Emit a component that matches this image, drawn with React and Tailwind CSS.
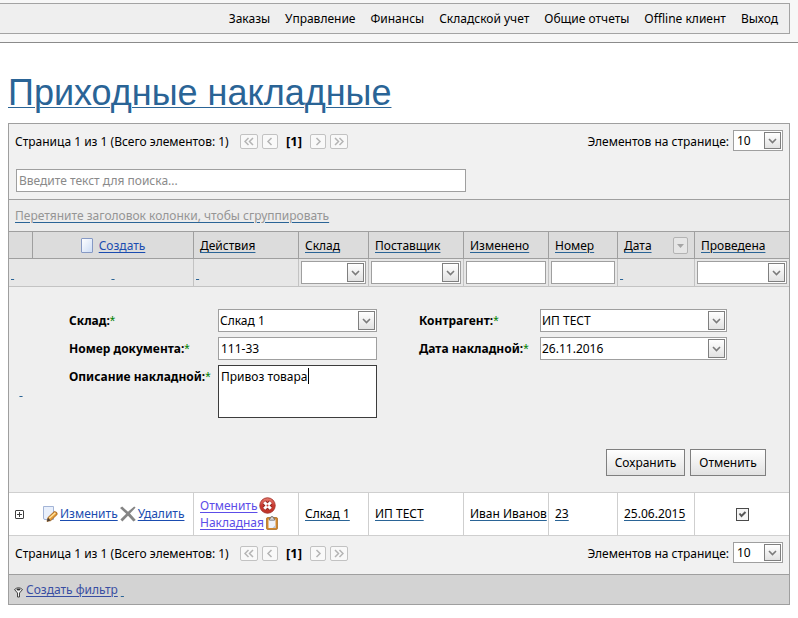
const FONT = "font-['Noto_Sans','Open_Sans',sans-serif]";

function Chevron() {
  return (
    <svg width="9" height="6" viewBox="0 0 9 6" fill="none" stroke="#7b7b7b" strokeWidth="1.6" aria-hidden="true">
      <path d="M1 1 L4.5 4.5 L8 1" />
    </svg>
  );
}

function Combo({ id, label, value, size = "h-[23px]", width = "w-full", text = "pl-px pt-px" }) {
  return (
    <div className={`relative ${size} ${width}`}>
      <select
        id={id}
        aria-label={label}
        className={`block h-full w-full appearance-none border border-[#9f9f9f] bg-white pr-5 outline-none ${text}`}
      >
        <option>{value}</option>
      </select>
      <span className="pointer-events-none absolute top-[2px] right-[2px] bottom-[2px] flex w-[17px] items-center justify-center border border-[#7f7f7f] bg-linear-to-b from-white to-[#e2e2e2]">
        <Chevron />
      </span>
    </div>
  );
}

function PageButton({ label, wide, d }) {
  return (
    <button
      type="button"
      aria-label={label}
      className={`flex h-[15px] items-center justify-center rounded-[2px] border border-[#c2c2c2] bg-[#f9f9f9] ${wide ? "w-[18px]" : "w-4"}`}
    >
      <svg width="10" height="9" viewBox="0 0 10 9" fill="none" stroke="#b4b4b4" strokeWidth="1.5" aria-hidden="true">
        <path d={d} />
      </svg>
    </button>
  );
}

function Pager({ id }) {
  return (
    <div className="flex items-start justify-between bg-[#f1f1f1] px-[6px] pt-[6px] pb-2">
      <div className="flex h-6 items-center">
        <span className="w-[225px]">Страница 1 из 1 (Всего элементов: 1)</span>
        <div className="flex items-center gap-1">
          <PageButton label="Первая" wide d="M4.5 1 L1 4.5 L4.5 8 M9 1 L5.5 4.5 L9 8" />
          <PageButton label="Назад" d="M6.5 1 L3 4.5 L6.5 8" />
          <b className="w-6 text-center text-[13px]">[1]</b>
          <PageButton label="Вперёд" d="M3.5 1 L7 4.5 L3.5 8" />
          <PageButton label="Последняя" wide d="M1 1 L4.5 4.5 L1 8 M5.5 1 L9 4.5 L5.5 8" />
        </div>
      </div>
      <div className="flex items-start gap-1">
        <label htmlFor={id} className="flex h-6 items-center">Элементов на странице:</label>
        <Combo id={id} value="10" size="h-[21px]" width="w-[50px]" text="pl-[3px]" />
      </div>
    </div>
  );
}

function Blank() {
  return (
    <a href="#" className="text-[#2a6496] underline decoration-[#2a6496] decoration-1 underline-offset-2">
      &nbsp;
    </a>
  );
}

function Required({ htmlFor, children }) {
  return (
    <label htmlFor={htmlFor} className="flex h-[23px] items-center font-bold whitespace-nowrap">
      {children}:
      <span className="font-['Liberation_Sans',Arial,sans-serif] text-sm font-normal text-[#008000]">*</span>
    </label>
  );
}

const cellLink = "text-black underline decoration-[#2a6496] decoration-1 underline-offset-2";
const blueLink = "text-[#1a4cb0] underline decoration-1 underline-offset-2";
const violetLink = "text-[#5c4de8] underline decoration-1 underline-offset-2";
const head = "h-[27px] border-r border-b border-[#9f9f9f] bg-[#dcdcdc] pt-px pl-[6px] text-left font-normal";
const filter = "h-7 border-r border-b border-[#c3c3c3] bg-[#e7e7e7] p-[2px]";
const dataBase = "h-[43px] border-b border-[#cfcfcf] bg-white";
const data = `${dataBase} border-r pl-[6px]`;
const field = "block w-full border border-[#9f9f9f] bg-white outline-none";

function DocIcon() {
  return (
    <svg width="12" height="16" viewBox="0 0 12 16" aria-hidden="true">
      <defs>
        <linearGradient id="doc" x1="0" y1="0" x2="1" y2="1">
          <stop offset="0" stopColor="#fff" />
          <stop offset="1" stopColor="#ccdcf5" />
        </linearGradient>
      </defs>
      <rect x="0.5" y="0.5" width="11" height="14" rx="0.5" fill="url(#doc)" stroke="#8699c4" />
    </svg>
  );
}

function EditIcon() {
  return (
    <svg width="16" height="16" viewBox="0 0 16 16" aria-hidden="true">
      <path d="M1.5 0.5 H11.5 V13.5 H3 Q1.5 13.5 1.5 12 Z" fill="#e9f0fc" stroke="#a3b4d6" />
      <path d="M6 11.5 L12.2 5.6 Q15.5 5.6 15.2 8.4 L8.8 14.6 L5 15.4 Z" fill="#e39a35" stroke="#9a5c1c" strokeWidth="0.8" />
      <path d="M7.3 12.3 L13.4 6.7" stroke="#ffe3a3" strokeWidth="1.4" />
      <path d="M5 15.5 L6 11.7 L8.6 14.5 Z" fill="#4a4038" />
    </svg>
  );
}

function DeleteIcon() {
  return (
    <svg width="16" height="16" viewBox="0 0 16 16" fill="#858585" aria-hidden="true">
      <path d="M0 2 L2.2 0.6 L8 5.8 L14.2 0.4 L15.6 1.6 L10 7.6 L15.8 14 L13.4 15.6 L8 9.8 L2.4 15.4 L0.4 13.6 L6.2 7.7 Z" />
    </svg>
  );
}

function CancelIcon() {
  return (
    <svg width="17" height="17" viewBox="0 0 17 17" aria-hidden="true">
      <defs>
        <linearGradient id="red" x1="0" y1="0" x2="0" y2="1">
          <stop offset="0" stopColor="#e88074" />
          <stop offset="0.5" stopColor="#cb3a30" />
          <stop offset="1" stopColor="#c03228" />
        </linearGradient>
      </defs>
      <circle cx="8.5" cy="8.5" r="7.7" fill="url(#red)" stroke="#a93a32" />
      <path d="M5.2 5.2 L11.8 11.8 M11.8 5.2 L5.2 11.8" stroke="#8f2620" strokeWidth="4.8" />
      <path d="M5.2 5.2 L11.8 11.8 M11.8 5.2 L5.2 11.8" stroke="#fff" strokeWidth="3" />
      <circle cx="8.5" cy="8.5" r="1" fill="#cb3a30" />
    </svg>
  );
}

function ClipboardIcon() {
  return (
    <svg width="12" height="14" viewBox="0 0 12 14" aria-hidden="true">
      <rect x="0.7" y="1.7" width="10.6" height="11.6" rx="0.6" fill="#dc8f30" stroke="#a86a1e" />
      <rect x="2.5" y="3.5" width="7" height="8.5" fill="#eff3fa" />
      <path d="M6.5 12 L9.5 9 V12 Z" fill="#b9c4d6" />
      <path d="M3.5 4.2 V2.2 H4.8 L5.2 0.5 H6.8 L7.2 2.2 H8.5 V4.2 Z" fill="#dcdcdc" stroke="#6c6c6c" strokeWidth="0.8" />
    </svg>
  );
}

export default function App() {
  const menu = ["Заказы", "Управление", "Финансы", "Складской учет", "Общие отчеты", "Offline клиент", "Выход"];
  return (
    <div className={`${FONT} text-xs text-black`}>
      <header className="border-b border-[#8b8b8b] bg-[#f7f7f7] pt-[3px] pr-2 pb-2">
        <nav className="flex h-[31px] items-center justify-end gap-[15px] border border-l-0 border-[#a3a3a3] bg-[#efefef] pr-[11px]">
          {menu.map((m) => (
            <a key={m} href="#">{m}</a>
          ))}
        </nav>
      </header>

      <main className="px-2 pt-[30px] pb-3">
        <h1 className="mb-[10px] font-['Liberation_Sans',Arial,sans-serif] text-4xl leading-10 text-[#2a6496]">
          <a href="#" className="underline decoration-1 underline-offset-2">Приходные накладные</a>
        </h1>

        <div className="border border-[#9f9f9f]">
          <Pager id="size-top" />
          <div className="border-b border-[#9f9f9f] bg-[#f1f1f1] p-[7px]">
            <input
              type="text"
              aria-label="Поиск"
              placeholder="Введите текст для поиска..."
              className="block h-[23px] w-[450px] max-w-full border border-[#9f9f9f] bg-white px-[2px] outline-none placeholder:text-[#8a8a8a]"
            />
          </div>
          <div className="flex h-8 items-center border-b border-[#9f9f9f] bg-[#ececec] pl-[6px]">
            <a href="#" className="text-[#959595] underline decoration-[#2a6496] decoration-1 underline-offset-2">
              Перетяните заголовок колонки, чтобы сгруппировать
            </a>
          </div>

          <table className="w-full table-fixed border-separate border-spacing-0">
            <colgroup>
              <col className="w-[24px]" />
              <col className="w-[161px]" />
              <col className="w-[105px]" />
              <col className="w-[70px]" />
              <col className="w-[95px]" />
              <col className="w-[85px]" />
              <col className="w-[69px]" />
              <col className="w-[77px]" />
              <col className="w-[94px]" />
            </colgroup>
            <thead>
              <tr>
                <th className={head}></th>
                <th className={head}>
                  <div className="flex items-center justify-center gap-[6px] pr-[6px]">
                    <DocIcon />
                    <a href="#" className={blueLink}>Создать</a>
                  </div>
                </th>
                <th className={head}><a href="#" className={cellLink}>Действия</a></th>
                <th className={head}><a href="#" className={cellLink}>Склад</a></th>
                <th className={head}><a href="#" className={cellLink}>Поставщик</a></th>
                <th className={head}><a href="#" className={cellLink}>Изменено</a></th>
                <th className={head}><a href="#" className={cellLink}>Номер</a></th>
                <th className={head}>
                  <div className="flex items-center justify-between pr-[6px]">
                    <a href="#" className={cellLink}>Дата</a>
                    <button type="button" aria-label="Фильтр по дате" className="flex h-[17px] w-[15px] items-center justify-center rounded-[2px] border border-[#b3b3b3] bg-[#e6e6e6]">
                      <svg width="7" height="4" viewBox="0 0 7 4" aria-hidden="true"><path d="M0 0 H7 L3.5 4 Z" fill="#a5a5a5" /></svg>
                    </button>
                  </div>
                </th>
                <th className={`${head} border-r-0`}><a href="#" className={cellLink}>Проведена</a></th>
              </tr>
            </thead>
            <tbody>
              <tr>
                <td className={`${filter} border-r-0`}><Blank /></td>
                <td className={`${filter} text-center`}><Blank /></td>
                <td className={filter}><Blank /></td>
                <td className={filter}><Combo label="Фильтр: склад" value="" /></td>
                <td className={filter}><Combo label="Фильтр: поставщик" value="" /></td>
                <td className={filter}><input type="text" aria-label="Фильтр: изменено" className={`${field} h-[23px]`} /></td>
                <td className={filter}><input type="text" aria-label="Фильтр: номер" className={`${field} h-[23px]`} /></td>
                <td className={filter}><Blank /></td>
                <td className={`${filter} border-r-0`}><Combo label="Фильтр: проведена" value="" /></td>
              </tr>

              <tr>
                <td className="border-b border-[#cfcfcf] bg-[#efefef] text-center"><Blank /></td>
                <td colSpan={8} className="border-b border-[#cfcfcf] bg-[#efefef] pt-[22px] pr-[23px] pb-4 pl-9">
                  <form>
                    <div className="mr-[39px] grid grid-cols-[149px_159fr_42px_121px_187fr] gap-y-[5px]">
                      <Required htmlFor="store">Склад</Required>
                      <Combo id="store" value="Слкад 1" />
                      <span />
                      <Required htmlFor="agent">Контрагент</Required>
                      <Combo id="agent" value="ИП ТЕСТ" />
                      <Required htmlFor="number">Номер документа</Required>
                      <input id="number" type="text" defaultValue="111-33" className={`${field} h-[23px] px-[2px]`} />
                      <span />
                      <Required htmlFor="date">Дата накладной</Required>
                      <Combo id="date" value="26.11.2016" />
                      <Required htmlFor="note">Описание накладной</Required>
                      <div className="relative">
                        <textarea
                          id="note"
                          defaultValue="Привоз товара"
                          className="block h-[53px] w-full resize-none border border-[#3c3c3c] bg-white px-[2px] pt-[3px] outline-none"
                        />
                        <span className="pointer-events-none absolute top-[3px] left-[90px] h-4 w-px bg-black" />
                      </div>
                    </div>
                    <div className="mt-[31px] flex justify-end gap-[5px]">
                      <button type="button" className="h-[27px] w-[79px] border border-[#7f7f7f] bg-linear-to-b from-white to-[#e2e2e2]">Сохранить</button>
                      <button type="button" className="h-[27px] w-[76px] border border-[#7f7f7f] bg-linear-to-b from-white to-[#e2e2e2]">Отменить</button>
                    </div>
                  </form>
                </td>
              </tr>

              <tr>
                <td className={`${dataBase} pl-[6px]`}>
                  <button type="button" aria-label="Развернуть" className="block">
                    <svg width="9" height="9" viewBox="0 0 9 9" fill="none" stroke="#3f3f3f" aria-hidden="true">
                      <rect x="0.5" y="0.5" width="8" height="8" rx="0.5" fill="#fff" />
                      <path d="M2 4.5 H7 M4.5 2 V7" />
                    </svg>
                  </button>
                </td>
                <td className={`${dataBase} border-r pl-[9px]`}>
                  <div className="flex items-center gap-[2px]">
                    <EditIcon />
                    <a href="#" className={blueLink}>Изменить</a>
                    <DeleteIcon />
                    <a href="#" className={blueLink}>Удалить</a>
                  </div>
                </td>
                <td className={data}>
                  <div className="flex h-[17px] items-center gap-[2px]">
                    <a href="#" className={violetLink}>Отменить</a>
                    <CancelIcon />
                  </div>
                  <div className="flex h-[17px] items-center gap-[2px]">
                    <a href="#" className={violetLink}>Накладная</a>
                    <ClipboardIcon />
                  </div>
                </td>
                <td className={data}><a href="#" className={cellLink}>Слкад 1</a></td>
                <td className={data}><a href="#" className={cellLink}>ИП ТЕСТ</a></td>
                <td className={`${data} whitespace-nowrap`}><a href="#" className={cellLink}>Иван Иванов</a></td>
                <td className={data}><a href="#" className={cellLink}>23</a></td>
                <td className={data}><a href="#" className={cellLink}>25.06.2015</a></td>
                <td className={dataBase}>
                  <div className="relative mx-auto h-[13px] w-[13px]">
                    <input type="checkbox" defaultChecked aria-label="Проведена" className="block h-[13px] w-[13px] appearance-none border border-[#4a4a4a] bg-[#f4f4f4]" />
                    <svg className="pointer-events-none absolute inset-0" width="13" height="13" viewBox="0 0 13 13" fill="none" stroke="#555" strokeWidth="2" aria-hidden="true">
                      <path d="M3.5 5.5 L5.5 8 L9.5 4" />
                    </svg>
                  </div>
                </td>
              </tr>
            </tbody>
          </table>

          <Pager id="size-bottom" />
          <div className="border-t border-[#9f9f9f] bg-[#d3d3d3] pt-px">
            <div className="flex h-7 items-center gap-[3px] pl-[5px]">
              <svg width="9" height="15" viewBox="0 -4 9 15" aria-hidden="true">
                <path d="M0.5 2.5 Q4.5 -1 8.5 2.5 L5.5 6 V10 H3.5 V6 Z" fill="#f4f4f4" stroke="#444" />
                <ellipse cx="4.5" cy="2.6" rx="2" ry="1" fill="#333" />
              </svg>
              <a href="#" className="text-[#394ea2] underline decoration-1 underline-offset-2">Создать фильтр</a>
              <Blank />
            </div>
          </div>
        </div>
      </main>
    </div>
  );
}
